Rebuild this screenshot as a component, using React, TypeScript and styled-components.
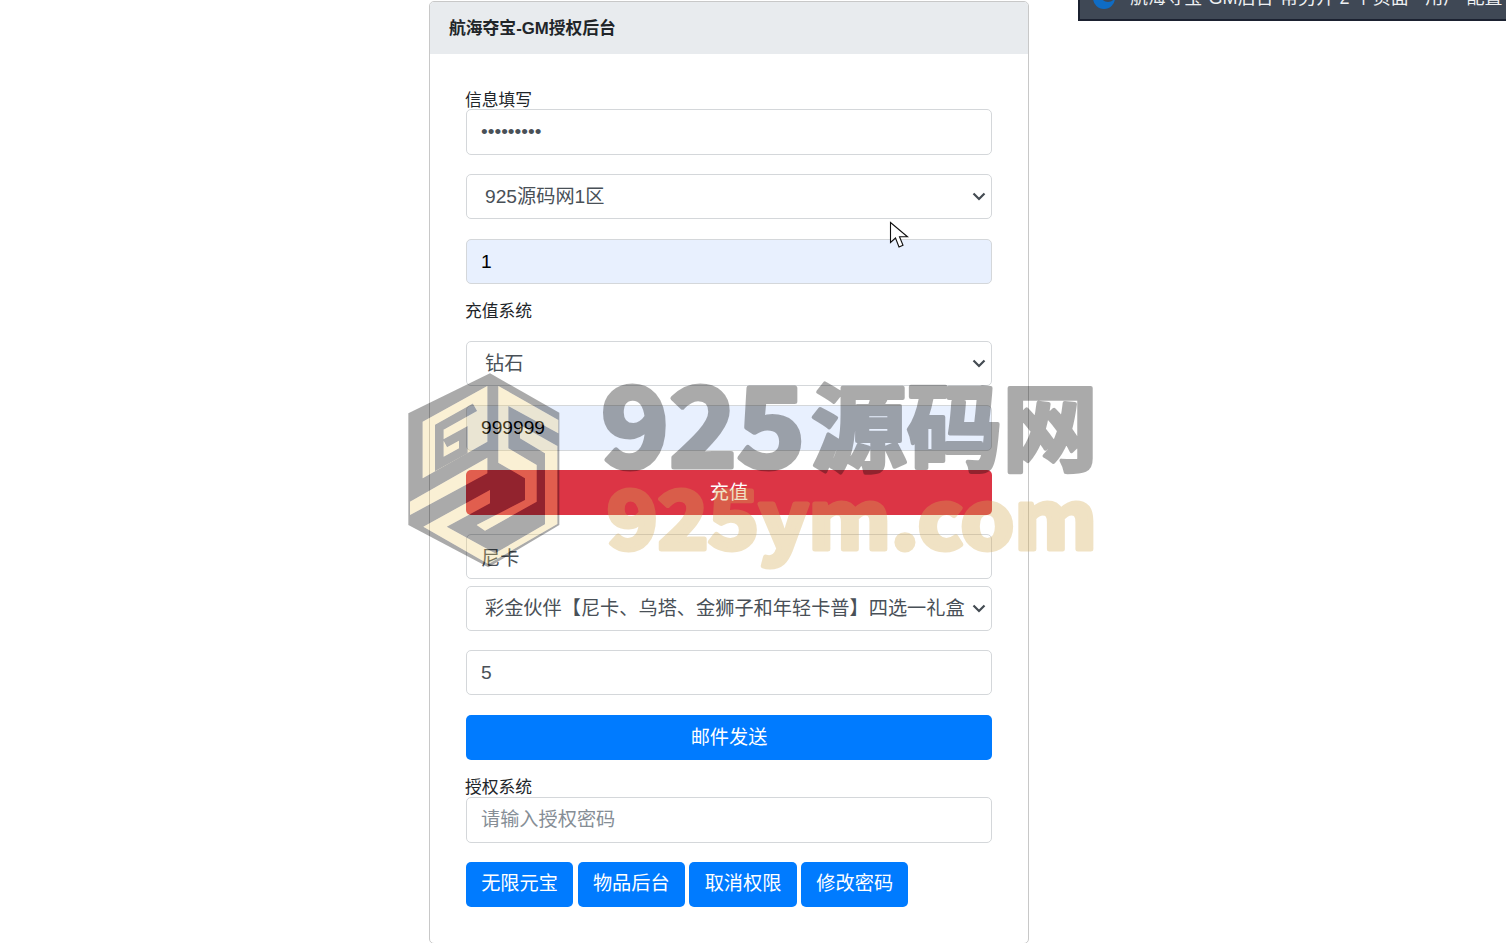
import styled, { createGlobalStyle } from "styled-components";

const Global = createGlobalStyle`
html,body{margin:0;padding:0;background:#fff;overflow:hidden;}
body{font-family:"Liberation Sans","Noto Sans CJK SC",sans-serif;font-size:16.8px;line-height:1.5;color:#212529;}
*{box-sizing:border-box;}
`;

const chevron =
  "data:image/svg+xml,%3Csvg xmlns='http://www.w3.org/2000/svg' width='14' height='9' viewBox='0 0 14 9'%3E%3Cpath d='M1.5 1.5 7 7l5.5-5.5' fill='none' stroke='%23444b52' stroke-width='2.2'/%3E%3C/svg%3E";

const Page = styled.div`
position:relative;
height:943px;
overflow:hidden;
padding:1px 0 0 429px;
`;

const Card = styled.div`
width:600px;
border:1px solid #c8c8c8;
border-radius:5px;
background:#fff;
`;

const CardHeader = styled.div`
height:52px;
padding:0 19px;
background:#e8ebee;
border-radius:4px 4px 0 0;
font-weight:700;
line-height:54px;
color:#212529;
`;

const CardBody = styled.form`
display:flex;
flex-direction:column;
padding:33px 36px 36px;
`;

const Label = styled.label<{ $mb: number }>`
display:block;
height:25px;
margin:0 0 ${(p) => p.$mb}px -1px;
line-height:27px;
`;

const Input = styled.input<{ $mb?: number; $tall?: boolean; $filled?: boolean }>`
display:block;
width:100%;
height:${(p) => (p.$tall ? 46 : 45)}px;
margin-bottom:${(p) => p.$mb ?? 19}px;
padding:0 14px;
border:1px solid #d4d7da;
border-radius:5px;
background:${(p) => (p.$filled ? "#e8f0fe" : "#fff")};
color:${(p) => (p.$filled ? "#000" : "#495057")};
font:19.2px "Liberation Sans","Noto Sans CJK SC",sans-serif;
outline:none;
&::placeholder{color:#868e96;opacity:1;}
`;

const Select = styled.select<{ $mb?: number }>`
display:block;
width:100%;
height:45px;
margin-bottom:${(p) => p.$mb ?? 19}px;
padding:0 24px 0 18px;
border:1px solid #d4d7da;
border-radius:5px;
appearance:none;
background:#fff url("${chevron}") no-repeat right 5px center;
color:#495057;
font:19.2px "Liberation Sans","Noto Sans CJK SC",sans-serif;
outline:none;
`;

const WideButton = styled.button<{ $red?: boolean; $mb?: number }>`
display:block;
width:100%;
height:45px;
margin-bottom:${(p) => p.$mb ?? 19}px;
padding:0 0 4px;
border:0;
border-radius:5px;
background:${(p) => (p.$red ? "#dc3545" : "#007bff")};
color:#fff;
font:19.2px "Liberation Sans","Noto Sans CJK SC",sans-serif;
`;

const ButtonRow = styled.div`
display:flex;
gap:4.6px;
`;

const SmallButton = styled.button`
height:45px;
padding:0 15.2px 5px;
border:0;
border-radius:5px;
background:#007bff;
color:#fff;
font:19.2px "Liberation Sans","Noto Sans CJK SC",sans-serif;
`;

const TaskBar = styled.div`
position:absolute;
top:0;
left:1078px;
right:0;
height:21px;
overflow:hidden;
background:#3f4855;
border-left:2px solid #1b2130;
border-bottom:2px solid #1b2130;
`;

const TaskText = styled.div`
position:absolute;
left:50px;
top:-14px;
white-space:nowrap;
font-size:18px;
letter-spacing:.1px;
line-height:24px;
color:#eef0f2;
`;

const EdgeIcon = styled.svg`
position:absolute;
left:12px;
top:-14px;
`;

const Watermark = styled.svg`
position:absolute;
left:400px;
top:370px;
pointer-events:none;
`;

const Cursor = styled.svg`
position:absolute;
left:889px;
top:221px;
pointer-events:none;
`;

const tan = [
  "M262 48 68 155V325L262 215Z",
  "M30 395 262 263V310L30 435Z",
  "M295 48 475 150V190L325 108V235L410 285V395L255 482 230 465 375 390V325L295 278Z",
  "M360 165 472 228V462L265 582 70 470 270 360V400L140 470 285 550 435 463V250L360 205Z",
].join("");
const grayOver = "M225 112 118 172V282L190 242V190L135 220";

function Logo() {
  return (
    <g>
      <defs>
        <mask id="grayMask" maskUnits="userSpaceOnUse" x="0" y="0" width="510" height="615">
          <rect width="510" height="615" fill="#fff" />
          <path d={tan} fill="#000" />
          <path d={grayOver} fill="none" stroke="#fff" strokeWidth="26" />
        </mask>
        <mask id="tanMask" maskUnits="userSpaceOnUse" x="0" y="0" width="510" height="615">
          <path d={tan} fill="#fff" />
          <path d={grayOver} fill="none" stroke="#000" strokeWidth="26" />
        </mask>
      </defs>
      <polygon
        points="270,10 478,128 478,465 265,592 25,465 25,130"
        fill="#000"
        opacity="0.33"
        mask="url(#grayMask)"
      />
      <rect width="510" height="615" fill="#f0ca68" opacity="0.28" mask="url(#tanMask)" />
    </g>
  );
}

export default function App() {
  return (
    <Page>
      <Global />
      <Card>
        <CardHeader>航海夺宝-GM授权后台</CardHeader>
        <CardBody onSubmit={(e) => e.preventDefault()}>
          <Label $mb={-3}>信息填写</Label>
          <Input type="password" defaultValue="123456789" $tall />
          <Select defaultValue="1" $mb={20}>
            <option value="1">925源码网1区</option>
          </Select>
          <Input defaultValue="1" $filled $mb={14} />
          <Label $mb={18}>充值系统</Label>
          <Select>
            <option>钻石</option>
          </Select>
          <Input defaultValue="999999" $filled $tall />
          <WideButton type="button" $red>充值</WideButton>
          <Input defaultValue="尼卡" $mb={7} />
          <Select>
            <option>彩金伙伴【尼卡、乌塔、金狮子和年轻卡普】四选一礼盒</option>
          </Select>
          <Input defaultValue="5" $mb={20} />
          <WideButton type="button" $mb={14}>邮件发送</WideButton>
          <Label $mb={-2}>授权系统</Label>
          <Input placeholder="请输入授权密码" $tall />
          <ButtonRow>
            <SmallButton type="button">无限元宝</SmallButton>
            <SmallButton type="button">物品后台</SmallButton>
            <SmallButton type="button">取消权限</SmallButton>
            <SmallButton type="button">修改密码</SmallButton>
          </ButtonRow>
        </CardBody>
      </Card>

      <TaskBar>
        <EdgeIcon width="24" height="24" viewBox="0 0 24 24">
          <circle cx="12" cy="12" r="11" fill="#0f6cc4" />
          <circle cx="16" cy="8" r="8" fill="#3f4855" />
        </EdgeIcon>
        <TaskText>航海夺宝-GM后台-帮另开 2 个页面 · 用户 配置</TaskText>
      </TaskBar>

      <Watermark width="710" height="205" viewBox="0 0 710 205">
        <svg width="170" height="205" viewBox="0 0 510 615">
          <Logo />
        </svg>
        <text
          x="201"
          y="97"
          textLength="204"
          lengthAdjust="spacingAndGlyphs"
          fontFamily="'Noto Sans CJK SC',sans-serif"
          fontWeight="700"
          fontSize="110"
          fill="#000"
          stroke="#000"
          strokeWidth="5"
          strokeLinejoin="round"
          opacity="0.33"
        >
          925
        </text>
        <text
          x="411"
          y="94"
          textLength="287"
          lengthAdjust="spacingAndGlyphs"
          fontFamily="'Noto Sans CJK SC',sans-serif"
          fontWeight="700"
          fontSize="95"
          fill="#000"
          stroke="#000"
          strokeWidth="4"
          strokeLinejoin="round"
          opacity="0.33"
        >
          源码网
        </text>
        <text
          x="207"
          y="179"
          textLength="490"
          lengthAdjust="spacingAndGlyphs"
          fontFamily="'Noto Sans CJK SC',sans-serif"
          fontWeight="700"
          fontSize="80"
          fill="#d4ab55"
          stroke="#d4ab55"
          strokeWidth="5"
          strokeLinejoin="round"
          opacity="0.34"
        >
          925ym.com
        </text>
      </Watermark>

      <Cursor width="22" height="30" viewBox="0 0 22 30">
        <path
          d="M1.5 1.5V21.5L6.5 17 10 26 14 24.3 10.5 15.8H18.5Z"
          fill="#fff"
          stroke="#111"
          strokeWidth="1.1"
          strokeLinejoin="miter"
        />
      </Cursor>
    </Page>
  );
}
